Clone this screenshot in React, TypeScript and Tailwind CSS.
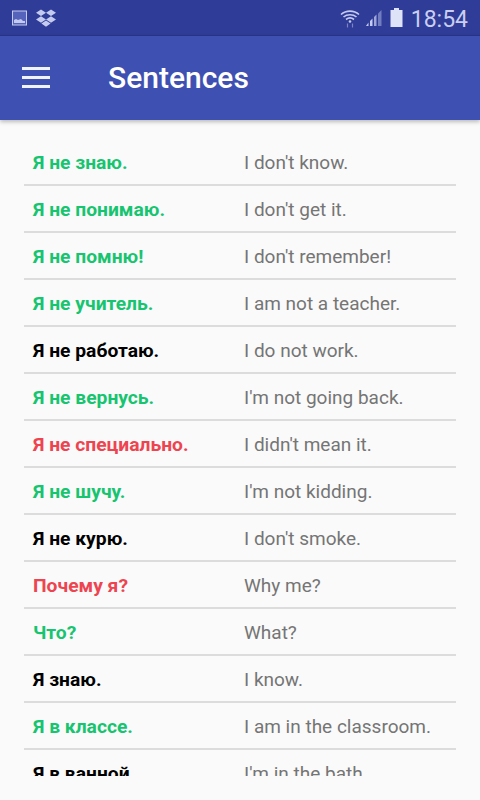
const rows = [
  { ru: 'Я не знаю.', en: "I don't know.", color: 'text-[#17c46f]' },
  { ru: 'Я не понимаю.', en: "I don't get it.", color: 'text-[#17c46f]' },
  { ru: 'Я не помню!', en: "I don't remember!", color: 'text-[#17c46f]' },
  { ru: 'Я не учитель.', en: 'I am not a teacher.', color: 'text-[#17c46f]' },
  { ru: 'Я не работаю.', en: 'I do not work.', color: 'text-black' },
  { ru: 'Я не вернусь.', en: "I'm not going back.", color: 'text-[#17c46f]' },
  { ru: 'Я не специально.', en: "I didn't mean it.", color: 'text-[#ee4450]' },
  { ru: 'Я не шучу.', en: "I'm not kidding.", color: 'text-[#17c46f]' },
  { ru: 'Я не курю.', en: "I don't smoke.", color: 'text-black' },
  { ru: 'Почему я?', en: 'Why me?', color: 'text-[#ee4450]' },
  { ru: 'Что?', en: 'What?', color: 'text-[#17c46f]' },
  { ru: 'Я знаю.', en: 'I know.', color: 'text-black' },
  { ru: 'Я в классе.', en: 'I am in the classroom.', color: 'text-[#17c46f]' },
  { ru: 'Я в ванной', en: "I'm in the bath", color: 'text-black' },
]

function StatusBar() {
  return (
    <div className="h-9 shrink-0 bg-[#2f3c98] flex items-center justify-between pl-3 pr-3 border-b border-[#2a3588]">
      <div className="flex items-center gap-[9px] text-[#c5cbef]">
        <svg width="16" height="16" viewBox="0 0 16 16" fill="none">
          <rect x="0.5" y="1" width="14" height="14" stroke="currentColor" fill="#5563bd" />
          <path d="M2 13v-3l2-1 2 1 3-1 2 2 2 0v2z" fill="currentColor" />
        </svg>
        <svg width="20" height="18" viewBox="0 0 20 18" fill="currentColor" className="-ml-px">
          <path d="M5 0.5 10 3.7 5 7 0 3.7zM15 0.5 20 3.7 15 7 10 3.7zM5 7.2 10 10.5 5 13.8 0 10.5zM15 7.2 20 10.5 15 13.8 10 10.5zM10 11.5 14.6 14.6 10 17.8 5.4 14.6z" />
        </svg>
      </div>
      <div className="flex items-center text-[#c5cbef]">
        <svg width="20" height="20" viewBox="0 0 20 20" fill="none" stroke="currentColor" className="mr-[5px]">
          <path d="M1 6.5c5-4.5 13-4.5 18 0M3.5 9c3.5-3 9.5-3 13 0M6 11.5c2.300-1.800 5.700-1.800 8 0" strokeWidth="1.600" />
          <circle cx="10" cy="13.500" r="1.300" fill="currentColor" stroke="none" />
          <path d="M7.500 15.500v4M12.500 15.500v4" strokeWidth="1.200" opacity="0.5" />
        </svg>
        <svg width="18" height="18" viewBox="0 0 18 18" fill="currentColor" className="mr-[7px]">
          <path d="M1 17h2.500v-3.500z" />
          <path d="M5 17h2.500v-7.500L5 12z" />
          <path d="M9 17h2.500V5.500L9 8z" opacity="0.75" />
          <path d="M13 17h3.500V1L13 4.500z" opacity="0.45" />
        </svg>
        <svg width="13" height="19" viewBox="0 0 13 19" fill="#dfe3f8" className="mr-[8px]">
          <path d="M4 0h5v2h3.500v17H.5V2H4z" />
        </svg>
        <span className="text-[23px] leading-none text-[#c9cff0] pt-[3px]">18:54</span>
      </div>
    </div>
  )
}

export default function App() {
  return (
    <div className="h-[800px] w-[480px] overflow-hidden flex flex-col bg-[#fafafa] font-['Roboto',sans-serif]">
      <StatusBar />
      <header className="h-[84px] shrink-0 bg-[#3f50b3] flex items-center pl-[22px] shadow-[0_2px_4px_rgba(0,0,0,0.25)] z-10">
        <svg width="28" height="21" viewBox="0 0 28 21" fill="#f1f3fc" className="mb-[1px]">
          <rect y="0" width="28" height="3" />
          <rect y="9" width="28" height="3" />
          <rect y="18" width="28" height="3" />
        </svg>
        <h1 className="ml-[58px] text-[30px] font-medium text-white leading-none">Sentences</h1>
      </header>
      <main className="flex-1 min-h-0 pt-[19px] pb-6">
        <div className="h-full overflow-hidden px-6">
          {rows.map(row => (
            <div key={row.ru} className="h-[47px] flex items-center border-b-2 border-[#dcdcdc] leading-none">
              <span className={`w-[212px] pl-[9px] pt-[2px] text-[19.25px] font-bold ${row.color}`}>{row.ru}</span>
              <span className="pl-2 pt-[2px] text-[19px] text-[#757575]">{row.en}</span>
            </div>
          ))}
        </div>
      </main>
    </div>
  )
}
